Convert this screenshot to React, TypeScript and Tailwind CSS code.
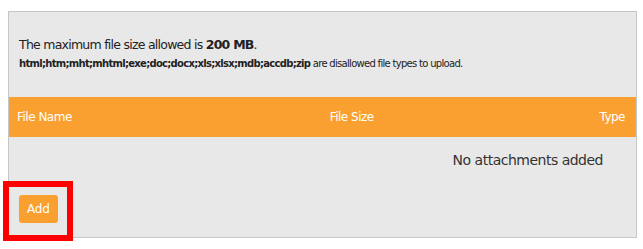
import React from 'react';

const font = { fontFamily: '"DejaVu Sans", Tahoma, sans-serif' };

const App: React.FC = () => {
  return (
    <div className="relative w-[643px] h-[249px] bg-white" style={font}>
      <div className="absolute left-[8px] top-[11px] w-[629px] h-[227px] border border-[#c6c6c6] bg-[#e8e8e8] flex flex-col">
        <div className="pt-[24px] pl-[10px] h-[85px]">
          <p className="text-[12.5px] leading-[18px] text-[#222] tracking-[-0.75px]">
            The maximum file size allowed is <b>200 MB</b>.
          </p>
          <p className="mt-[3px] text-[10px] leading-[14px] text-[#222] tracking-[-0.7px]">
            <b>html;htm;mht;mhtml;exe;doc;docx;xls;xlsx;mdb;accdb;zip</b> are disallowed file types to upload.
          </p>
        </div>
        <div className="h-[40px] bg-[#f9a031] grid grid-cols-3 items-center px-[8px] text-[12px] text-white tracking-[-0.5px]">
          <span>File Name</span>
          <span className="pl-[109px]">File Size</span>
          <span className="text-right pr-[3px]">Type</span>
        </div>
        <div className="flex justify-end pr-[33px] pt-[13px] h-[46px]">
          <span className="text-[14px] text-[#333] tracking-[-0.5px]">No attachments added</span>
        </div>
        <div className="pl-[10px] pt-[12px]">
          <button className="h-[28px] px-[8px] rounded-[3px] bg-[#f9a031] text-white text-[12px] tracking-[-0.2px]">
            Add
          </button>
        </div>
      </div>
      <div className="absolute left-[3px] top-[181px] w-[70px] h-[60px] border-[6px] border-[#ff0000]" />
    </div>
  );
};

export default App;
